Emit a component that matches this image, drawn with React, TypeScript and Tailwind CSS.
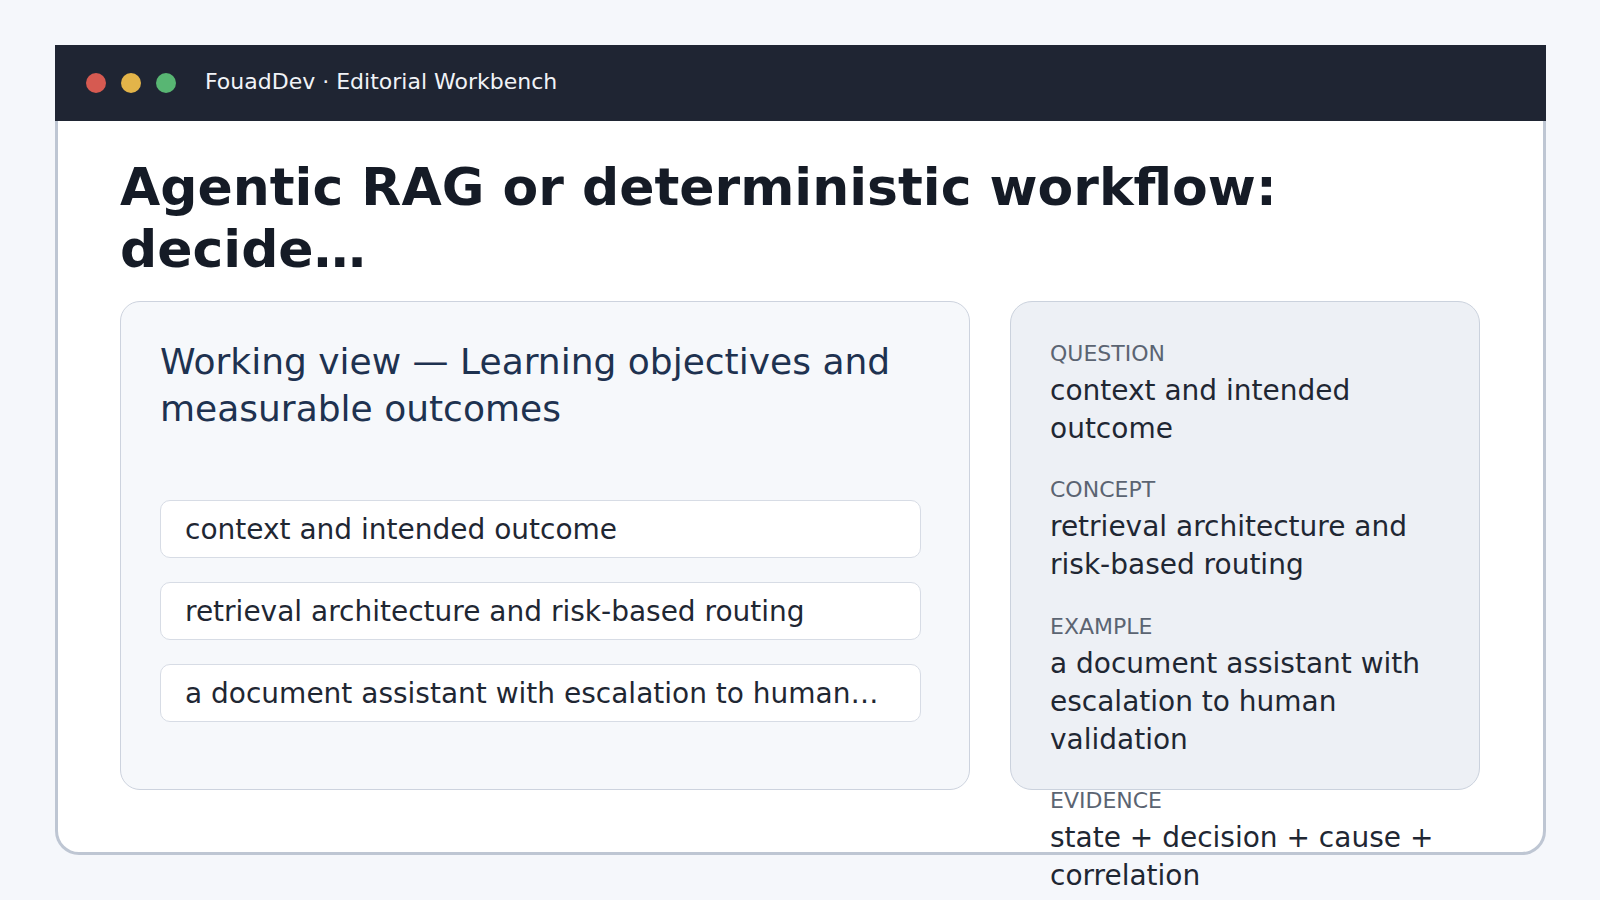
import React from "react";

const sections = [
  { label: "QUESTION", value: "context and intended outcome" },
  { label: "CONCEPT", value: "retrieval architecture and risk-based routing" },
  { label: "EXAMPLE", value: "a document assistant with escalation to human validation" },
  { label: "EVIDENCE", value: "state + decision + cause + correlation" },
];

const items = [
  "context and intended outcome",
  "retrieval architecture and risk-based routing",
  "a document assistant with escalation to human…",
];

export default function App() {
  return (
    <div
      className="min-h-screen bg-[#f5f7fb] pt-[45px] pl-[55px]"
      style={{ fontFamily: '"DejaVu Sans", Verdana, sans-serif' }}
    >
      <div className="w-[1491px]">
        <div className="h-[76px] bg-[#1f2533] flex items-center pl-[31px]">
          <div className="flex items-center gap-[15px]">
            <span className="block w-[20px] h-[20px] rounded-full bg-[#d65a51]" />
            <span className="block w-[20px] h-[20px] rounded-full bg-[#e3b449]" />
            <span className="block w-[20px] h-[20px] rounded-full bg-[#58b673]" />
          </div>
          <div className="ml-[29px] -mt-[2px] text-[22px] text-[#f1f3f7] leading-none">
            FouadDev · Editorial Workbench
          </div>
        </div>
        <div className="h-[734px] bg-white border-x-[3px] border-b-[3px] border-[#bec6d3] rounded-b-[24px] pl-[62px] pt-[35px]">
          <h1 className="text-[52px] font-bold leading-[1.2] text-[#151b26] w-[1300px]">
            Agentic RAG or deterministic workflow:
            <br />
            decide…
          </h1>
          <div className="mt-[20px] grid grid-cols-[850px_470px] gap-[40px]">
            <div className="h-[489px] rounded-[20px] border border-[#cdd3de] bg-[#f6f8fb] pl-[39px] pr-[48px] pt-[36px]">
              <div className="text-[36px] leading-[47px] text-[#1e3250]">
                Working view — Learning objectives and measurable outcomes
              </div>
              <div className="mt-[68px] flex flex-col gap-[24px]">
                {items.map((t) => (
                  <div
                    key={t}
                    className="h-[58px] flex items-center rounded-[10px] border border-[#d7dce5] bg-white pl-[24px] pr-[23px] pt-[3px] text-[28px] text-[#1f2733]"
                  >
                    <span className="truncate block w-full">{t}</span>
                  </div>
                ))}
              </div>
            </div>
            <div className="h-[489px] rounded-[22px] border border-[#cbd2dd] bg-[#edf0f5] pl-[39px] pr-[40px] pt-[37px]">
              <div className="flex flex-col gap-[28px]">
                {sections.map((s) => (
                  <div key={s.label}>
                    <div className="text-[22px] leading-[30px] text-[#5b6472]">{s.label}</div>
                    <div className="mt-[3px] text-[28px] leading-[1.35] text-[#1f2733]">{s.value}</div>
                  </div>
                ))}
              </div>
            </div>
          </div>
        </div>
      </div>
    </div>
  );
}
